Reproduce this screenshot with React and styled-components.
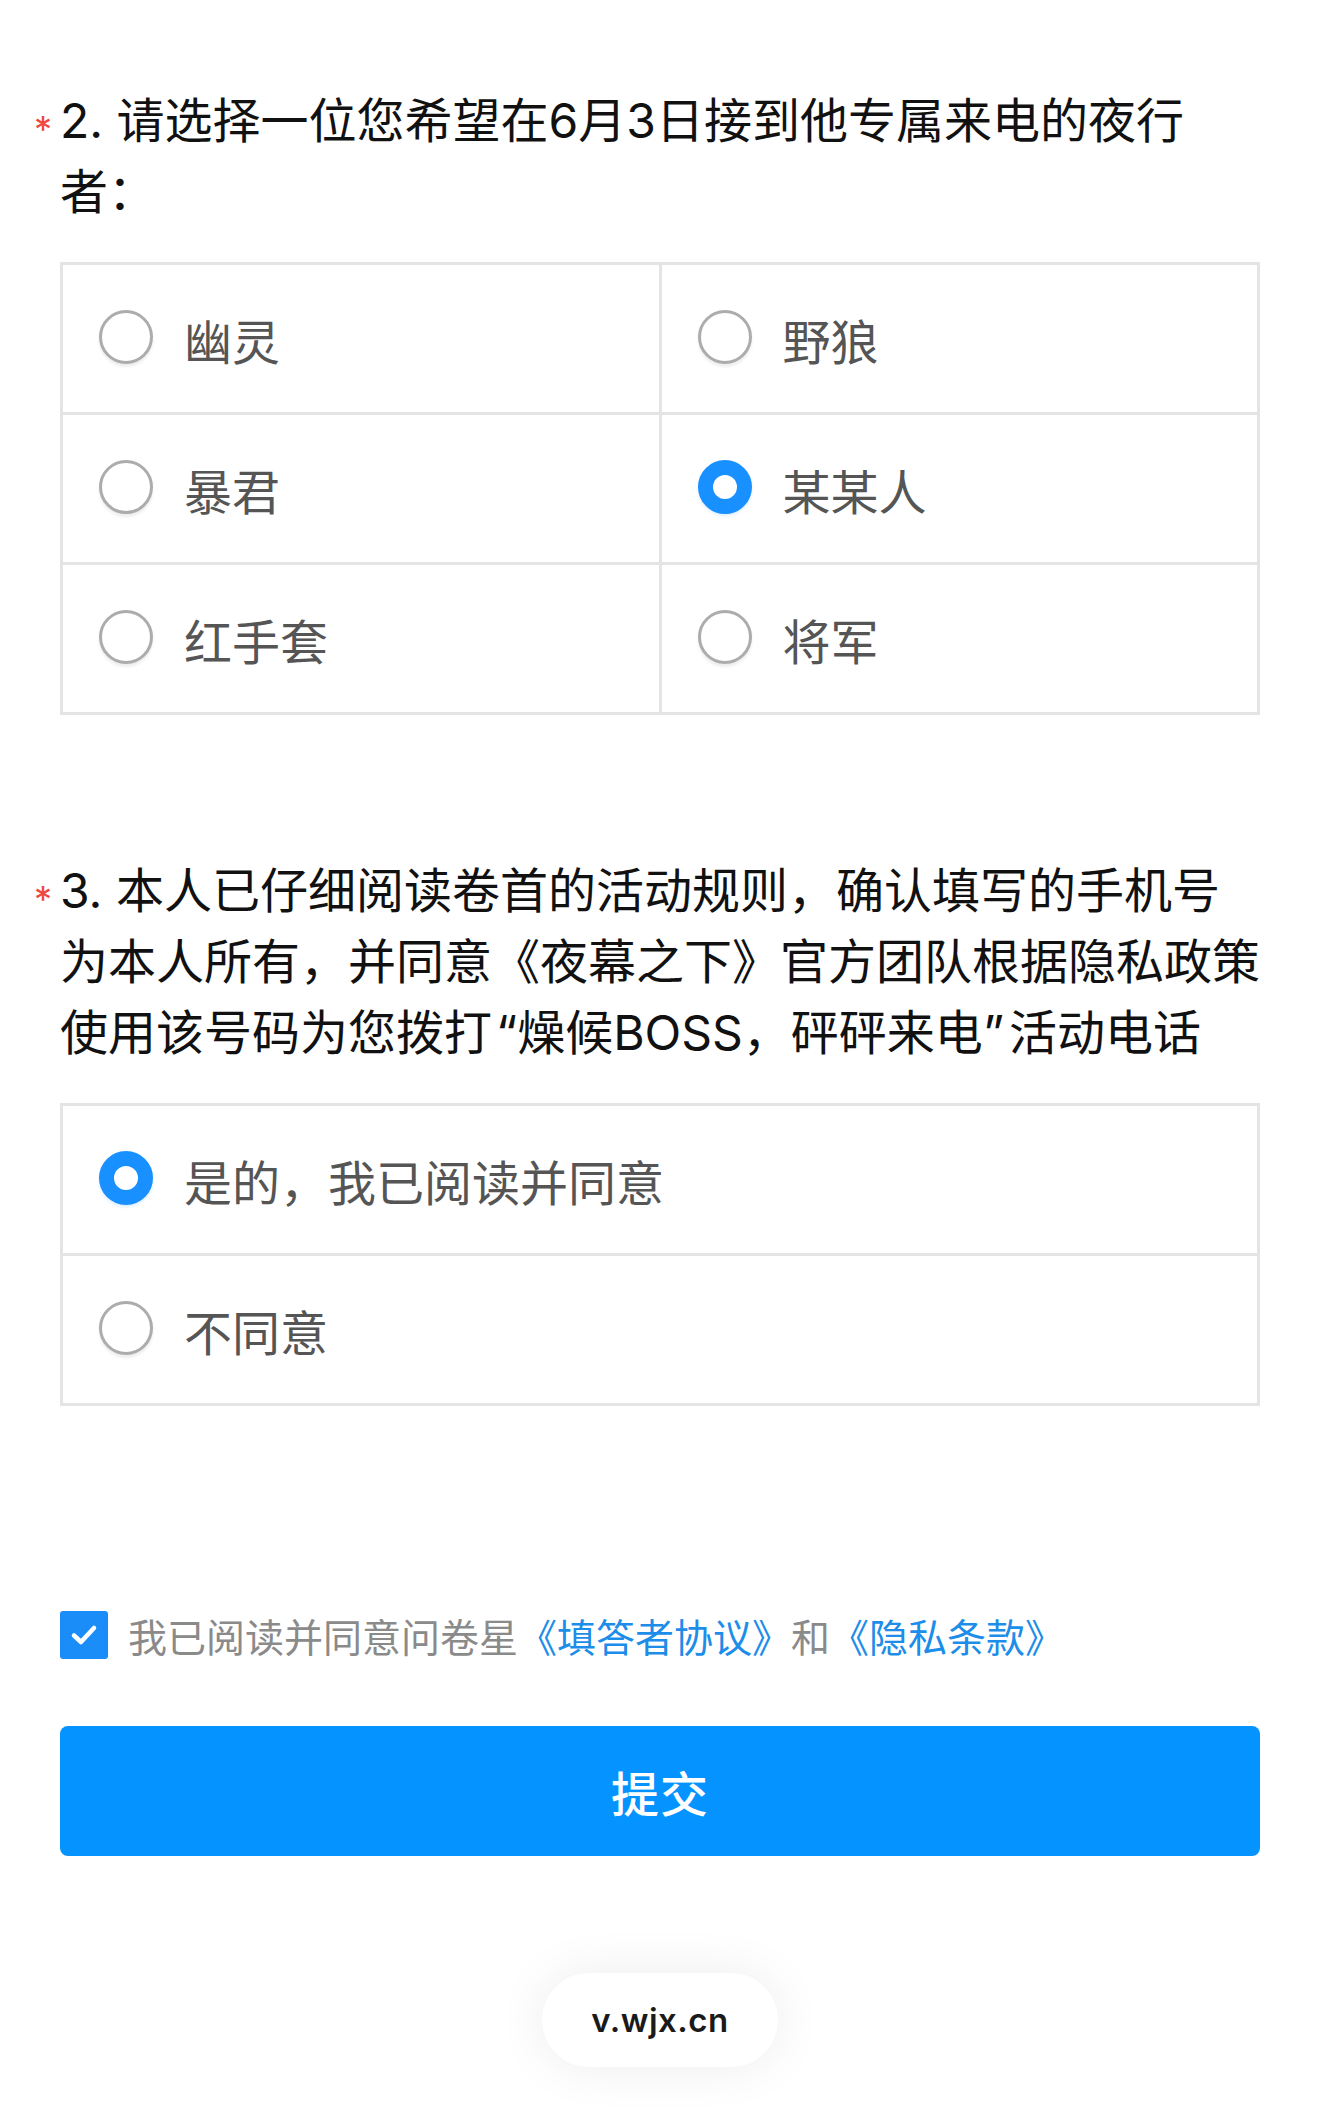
import React from "react";
import styled, { createGlobalStyle } from "styled-components";

const GlobalStyle = createGlobalStyle`
  html, body {
    margin: 0;
    padding: 0;
    background: #ffffff;
  }
  body {
    font-family: "Inter", "Noto Sans CJK SC", sans-serif;
    -webkit-font-smoothing: antialiased;
  }
`;

const Page = styled.div`
  width: 1320px;
  box-sizing: border-box;
  padding: 85px 60px 44px;
  display: flex;
  flex-direction: column;
`;

const Question = styled.section`
  display: flex;
  flex-direction: column;
  gap: 35px;
  margin-top: ${(p) => p.$top || 0}px;
`;

const Title = styled.h2`
  margin: 0 -4px 0 0;
  font-family: "Inter", "Noto Sans CJK SC", sans-serif;
  font-size: 48px;
  font-weight: 400;
  line-height: 71px;
  color: #111111;
`;

const Req = styled.span`
  display: inline-block;
  width: 26px;
  margin-left: -26px;
  color: #f0473f;
  font-size: 36px;
  line-height: 1;
  vertical-align: middle;
  transform: translateY(4px);
`;

const Quote = styled.span`
  display: inline-block;
  margin: ${(p) => (p.$open ? "0 0 0 4px" : "0 5px 0 0")};
`;

const OptionGrid = styled.div`
  display: grid;
  grid-template-columns: repeat(${(p) => p.$cols}, 1fr);
  gap: 3px;
  padding: 3px;
  background: #e4e4e4;
`;

const OptionCell = styled.label`
  display: flex;
  align-items: center;
  gap: 31px;
  height: 147px;
  padding-left: 36px;
  background: #ffffff;
`;

const Radio = styled.span`
  flex: none;
  box-sizing: border-box;
  width: 54px;
  height: 54px;
  margin-top: -4px;
  border-radius: 50%;
  background: #ffffff;
  border: ${(p) => (p.$checked ? "15px solid #1890ff" : "3px solid #acacac")};
  box-shadow: ${(p) =>
    p.$checked ? "0 2px 3px rgba(24,144,255,0.15)" : "0 3px 3px rgba(0,0,0,0.07)"};
`;

const OptionLabel = styled.span`
  font-family: "Noto Sans CJK SC", sans-serif;
  font-size: 48px;
  line-height: 1;
  color: #555555;
`;

const Agreement = styled.div`
  display: flex;
  align-items: center;
  gap: 20px;
  margin-top: 205px;
  height: 48px;
`;

const CheckBox = styled.span`
  flex: none;
  width: 48px;
  height: 48px;
  border-radius: 3px;
  background: #1a8df8;
  display: flex;
  align-items: center;
  justify-content: center;
`;

const AgreeText = styled.span`
  font-family: "Noto Sans CJK SC", sans-serif;
  font-size: 39px;
  line-height: 48px;
  color: #8a8a8a;
  white-space: nowrap;
`;

const Link = styled.span`
  color: #1c8de8;
`;

const SubmitButton = styled.button`
  margin-top: 67px;
  height: 130px;
  width: 100%;
  border: none;
  border-radius: 8px;
  background: #0593ff;
  color: #ffffff;
  font-family: "Noto Sans CJK SC", sans-serif;
  font-size: 48px;
  font-weight: 500;
  letter-spacing: 1px;
`;

const Footer = styled.footer`
  display: flex;
  justify-content: center;
  margin-top: 117px;
`;

const Pill = styled.div`
  width: 236px;
  height: 94px;
  border-radius: 47px;
  background: #ffffff;
  box-shadow: 0 0 50px rgba(0, 0, 0, 0.075);
  display: flex;
  align-items: center;
  justify-content: center;
  font-family: "Inter", sans-serif;
  font-size: 33px;
  font-weight: 600;
  letter-spacing: 0.5px;
  color: #1a1a1a;
`;

const q2Options = [
  { label: "幽灵" },
  { label: "野狼" },
  { label: "暴君" },
  { label: "某某人", checked: true },
  { label: "红手套" },
  { label: "将军" },
];

const q3Options = [
  { label: "是的，我已阅读并同意", checked: true },
  { label: "不同意" },
];

function Options({ items, cols }) {
  return (
    <OptionGrid $cols={cols}>
      {items.map((o) => (
        <OptionCell key={o.label}>
          <Radio $checked={!!o.checked} />
          <OptionLabel>{o.label}</OptionLabel>
        </OptionCell>
      ))}
    </OptionGrid>
  );
}

export default function App() {
  return (
    <>
      <GlobalStyle />
      <Page>
        <Question>
          <Title>
            <Req>*</Req>2. 请选择一位您希望在6月3日接到他专属来电的夜行者：
          </Title>
          <Options items={q2Options} cols={2} />
        </Question>

        <Question $top={140}>
          <Title>
            <Req>*</Req>3. 本人已仔细阅读卷首的活动规则，确认填写的手机号为本人所有，并同意《夜幕之下》官方团队根据隐私政策使用该号码为您拨打<Quote $open>“</Quote>燥候BOSS，砰砰来电<Quote>”</Quote>活动电话
          </Title>
          <Options items={q3Options} cols={1} />
        </Question>

        <Agreement>
          <CheckBox>
            <svg width="30" height="30" viewBox="0 0 30 30" fill="none">
              <polyline
                points="5,15.5 12,22 25,8"
                stroke="#ffffff"
                strokeWidth="4.5"
                strokeLinecap="round"
                strokeLinejoin="round"
              />
            </svg>
          </CheckBox>
          <AgreeText>
            我已阅读并同意问卷星<Link>《填答者协议》</Link>和<Link>《隐私条款》</Link>
          </AgreeText>
        </Agreement>

        <SubmitButton type="button">提交</SubmitButton>

        <Footer>
          <Pill>v.wjx.cn</Pill>
        </Footer>
      </Page>
    </>
  );
}
